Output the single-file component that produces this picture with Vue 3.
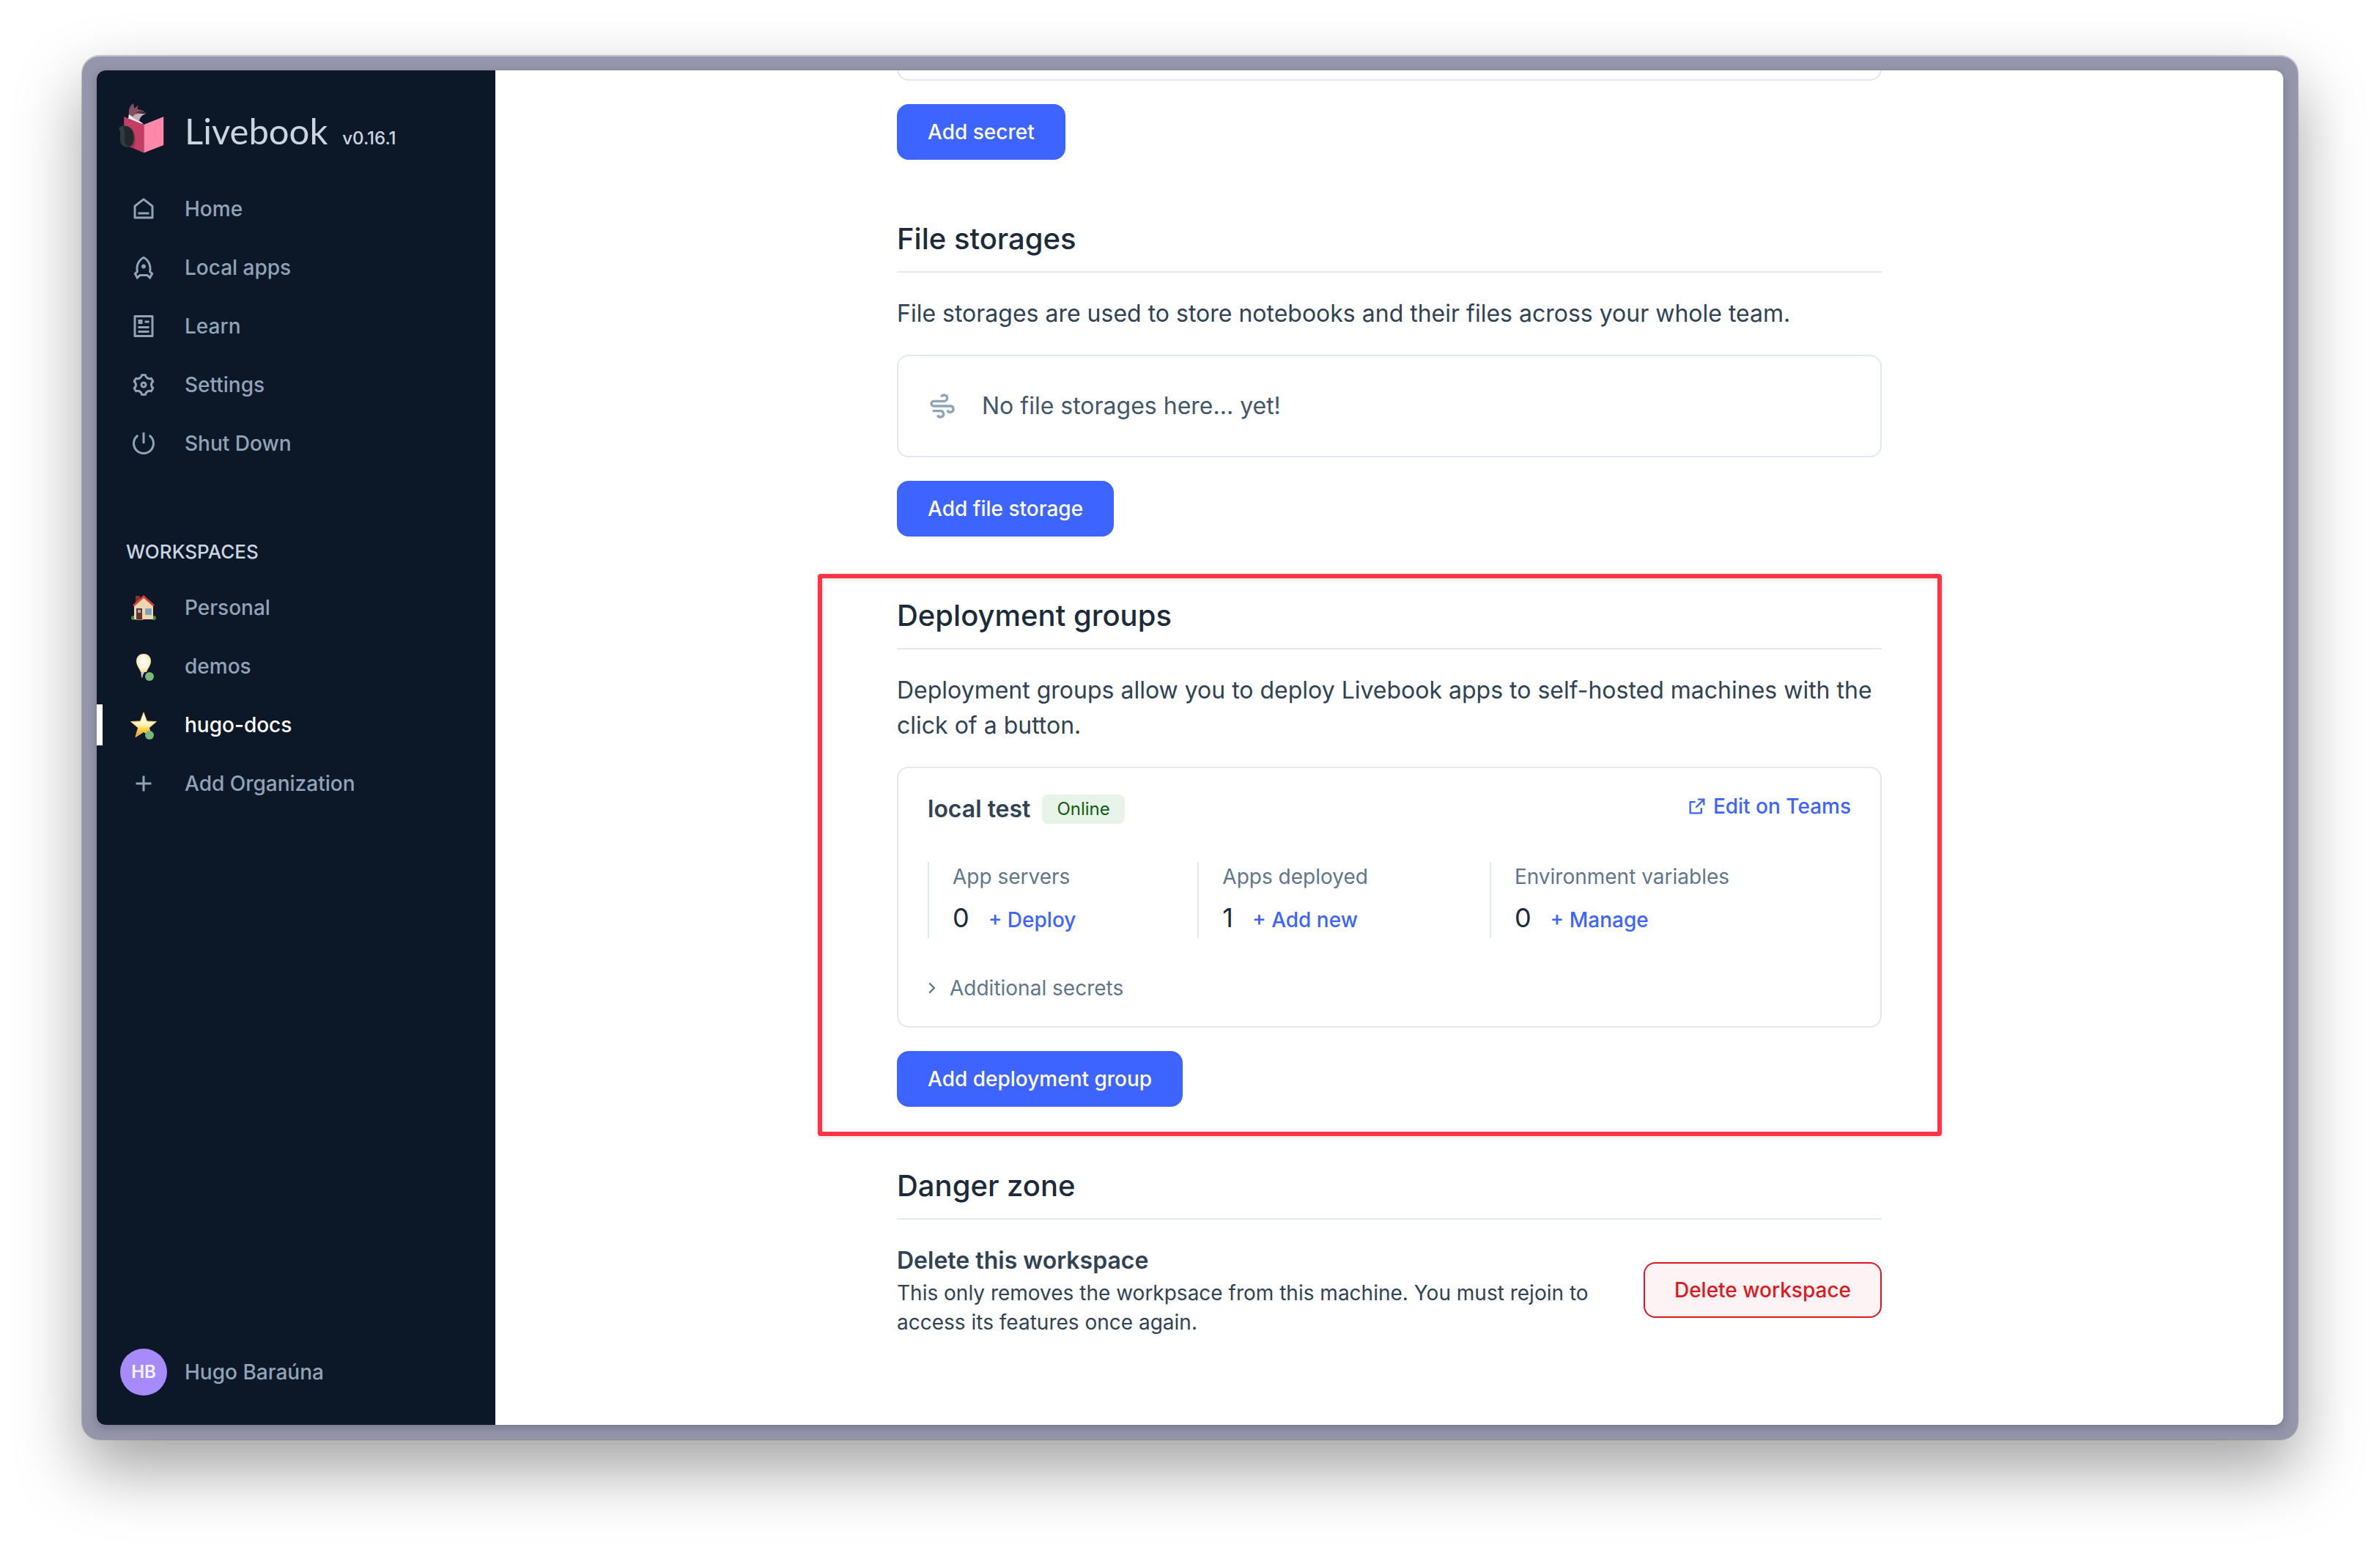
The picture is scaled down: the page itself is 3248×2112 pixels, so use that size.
<script setup>
const mainLinks = [
  { label: 'Home', path: 'M21 20a1 1 0 0 1-1 1H4a1 1 0 0 1-1-1V9.49a1 1 0 0 1 .386-.79l8-6.222a1 1 0 0 1 1.228 0l8 6.222a1 1 0 0 1 .386.79V20zm-2-1V9.978l-7-5.444-7 5.444V19h14zM7 15h10v2H7v-2z' },
  { label: 'Local apps', path: 'M5 13C5 7.912 7.902 3.563 12 1.818C16.097 3.563 19 7.912 19 13C19 13.823 18.924 14.626 18.779 15.403L20.719 17.235C20.885 17.391 20.924 17.639 20.815 17.838L18.32 22.413C18.187 22.656 17.884 22.745 17.641 22.613C17.599 22.59 17.561 22.561 17.528 22.527L15.293 20.292C15.105 20.105 14.851 20 14.585 20H9.414C9.149 20 8.894 20.105 8.707 20.292L6.472 22.527C6.276 22.723 5.96 22.723 5.765 22.527C5.731 22.494 5.702 22.456 5.679 22.414L3.184 17.838C3.075 17.639 3.115 17.391 3.28 17.235L5.22 15.403C5.076 14.626 5 13.823 5 13ZM6.475 19.696L7.292 18.879C7.855 18.316 8.618 18 9.414 18H14.585C15.381 18 16.144 18.316 16.707 18.879L17.524 19.696L18.506 17.896L17.406 16.857C16.912 16.39 16.688 15.705 16.813 15.036C16.937 14.372 17 13.691 17 13C17 9.13 15.005 5.7 12 4.04C8.995 5.7 7 9.13 7 13C7 13.691 7.063 14.372 7.186 15.036C7.311 15.705 7.087 16.39 6.593 16.857L5.494 17.896L6.475 19.696ZM12 13C10.895 13 10 12.105 10 11C10 9.895 10.895 9 12 9C13.104 9 14 9.895 14 11C14 12.105 13.104 13 12 13Z' },
  { label: 'Learn', path: 'M20 22H4a1 1 0 0 1-1-1V3a1 1 0 0 1 1-1h16a1 1 0 0 1 1 1v18a1 1 0 0 1-1 1zm-1-2V4H5v16h14zM7 6h4v4H7V6zm0 6h10v2H7v-2zm0 4h10v2H7v-2zm6-9h4v2h-4V7z' },
  { label: 'Settings', path: 'M3.34 17a10.018 10.018 0 0 1-.978-2.326 3 3 0 0 0 .002-5.347A9.99 9.99 0 0 1 4.865 4.99a3 3 0 0 0 4.631-2.674 9.99 9.99 0 0 1 5.007.002 3 3 0 0 0 4.632 2.672c.579.59 1.093 1.261 1.525 2.01.433.749.757 1.53.978 2.326a3 3 0 0 0-.002 5.347 9.99 9.99 0 0 1-2.501 4.337 3 3 0 0 0-4.631 2.674 9.99 9.99 0 0 1-5.007-.002 3 3 0 0 0-4.632-2.672A10.018 10.018 0 0 1 3.34 17zm5.66.196a4.993 4.993 0 0 1 2.25 2.77c.499.047 1 .048 1.499.001A4.993 4.993 0 0 1 15 17.197a4.993 4.993 0 0 1 3.525-.565c.29-.408.54-.843.748-1.298A4.993 4.993 0 0 1 18 12c0-1.26.47-2.437 1.273-3.334a8.126 8.126 0 0 0-.75-1.298A4.993 4.993 0 0 1 15 6.804a4.993 4.993 0 0 1-2.25-2.77c-.499-.047-1-.048-1.499-.001A4.993 4.993 0 0 1 9 6.803a4.993 4.993 0 0 1-3.525.565 7.99 7.99 0 0 0-.748 1.298A4.993 4.993 0 0 1 6 12c0 1.26-.47 2.437-1.273 3.334a8.126 8.126 0 0 0 .75 1.298A4.993 4.993 0 0 1 9 17.196zM12 15a3 3 0 1 1 0-6 3 3 0 0 1 0 6zm0-2a1 1 0 1 0 0-2 1 1 0 0 0 0 2z' },
  { label: 'Shut Down', path: 'M6.265 3.807l1.147 1.639a8 8 0 1 0 9.176 0l1.147-1.639A9.988 9.988 0 0 1 22 12c0 5.523-4.477 10-10 10S2 17.523 2 12a9.988 9.988 0 0 1 4.265-8.193zM11 12V2h2v10h-2z' },
]

const stats = [
  { label: 'App servers', value: 0, action: '+ Deploy' },
  { label: 'Apps deployed', value: 1, action: '+ Add new' },
  { label: 'Environment variables', value: 0, action: '+ Manage' },
]
</script>

<template>
  <div class="stage">
    <div class="frame">
      <div class="window">
        <aside class="sidebar">
          <a class="brand" href="#">
            <span class="cell">
              <svg class="logo" viewBox="2 0 64 68" aria-hidden="true">
                <path d="M14 14 L31 26 L34.400 29 L24 26 L13 21Z" fill="#e9edf2" />
                <path d="M14 15 C13 9 15 3 19.800 0 L21.500 7 L26.500 2.500 L25.500 8 C30 8.500 35 10.500 38 13.500 C30 12 23 13 20 19Z" fill="#85505f" />
                <path d="M19.500 19.500 C20 14.500 25 12.500 37 14.300 C32 16 28.500 19 28 25Z" fill="#c9abb3" />
                <path d="M23 13 C27 12 33 12.500 37.500 14 L38 13 C33 10 27 10 23 13Z" fill="#1c2a3a" opacity=".75" />
                <path d="M7.200 18.300 L34.400 29 V67.500 L7.200 56Z" fill="#c43d63" />
                <path d="M61.200 18.300 L34.400 29 V67.500 L61.200 57Z" fill="#ff87a7" />
                <path d="M18 34 C23 40 24.500 53 20 61.500 L12 58Z" fill="#a1304f" />
                <path d="M0 34 C4 29.500 9 30 13 31.500 C20 35 22 44 20.500 51 C19.500 57 16 60 12 59.700 C5 59.500 1.500 55 2 47 C2.300 41 2.500 38 0 34Z" fill="#323a41" />
                <path d="M8 31 C17 31 21.500 40 20.600 49 C20 56 16.500 59 13 58.500 C9 57 8 52 8 47 C8 41 9 36 6 33Z" fill="#21282b" />
              </svg>
            </span>
            <span class="brand-text">
              <span class="brand-name">Livebook</span>
              <span class="version">v0.16.1</span>
            </span>
          </a>

          <nav class="menu">
            <a v-for="link in mainLinks" :key="link.label" class="item" href="#">
              <span class="cell"><svg class="icon" viewBox="0 0 24 24" aria-hidden="true"><path :d="link.path" /></svg></span>
              {{ link.label }}
            </a>
          </nav>

          <h2 class="menu-title">WORKSPACES</h2>
          <nav class="menu">
            <a class="item" href="#">
              <span class="cell">
                <svg class="icon" viewBox="0 0 36 36" aria-hidden="true">
                  <circle cx="4" cy="32" r="3" fill="#4f8a3c" /><circle cx="32" cy="32" r="3" fill="#4f8a3c" />
                  <path d="M7 2h6v10H7z" fill="#8e2f2a" />
                  <path d="M5 15 18 3l13 12v19H5z" fill="#ecd8b0" />
                  <path d="M18 1 3 14.500l2 2L18 5l13 11.500 2-2z" fill="#d8403a" />
                  <path d="M8 19h8v15H8z" fill="#6b3325" /><path d="M10 21h4v4h-4z" fill="#7db9dd" />
                  <path d="M20 19h9v9h-9z" fill="#b79f7d" /><path d="M21 20h7v7h-7z" fill="#6ba6d6" />
                  <path d="M7 34h10v1H7z" fill="#8d8678" />
                </svg>
              </span>
              Personal
            </a>
            <a class="item" href="#">
              <span class="cell">
                <svg class="icon" viewBox="0 0 36 36" aria-hidden="true">
                  <defs>
                    <radialGradient id="bulb" cx=".5" cy=".45" r=".6"><stop offset="0" stop-color="#fffdfa" /><stop offset=".55" stop-color="#fdf3dc" /><stop offset="1" stop-color="#f3d27c" /></radialGradient>
                  </defs>
                  <path d="M18 1C11.500 1 8 5.500 8 11c0 6 4.500 10 6 15h8c1.500-5 6-9 6-15 0-5.500-3.500-10-10-10z" fill="url(#bulb)" />
                  <path d="M14.200 26h5l-2.200 4-.8 4.500-1.200-2z" fill="#c5c3cb" />
                </svg>
                <span class="dot"></span>
              </span>
              demos
            </a>
            <a class="item active" href="#" aria-current="page">
              <span class="cell">
                <svg class="icon" viewBox="0 0 36 36" aria-hidden="true">
                  <defs>
                    <linearGradient id="star" x1="0" y1="0" x2="0" y2="1"><stop offset="0" stop-color="#fffdf2" /><stop offset=".5" stop-color="#fff3bd" /><stop offset=".68" stop-color="#fbd34a" /><stop offset="1" stop-color="#e8941a" /></linearGradient>
                  </defs>
                  <path d="M18 1l4.500 12 13 .5-10 8.500 3.500 12.500L18 27.500 7 34.500 10.500 22 .5 13.500l13-.5z" fill="url(#star)" stroke="#efc56a" stroke-linejoin="round" />
                </svg>
                <span class="dot"></span>
              </span>
              hugo-docs
            </a>
            <a class="item" href="#">
              <span class="cell"><svg class="icon" viewBox="0 0 24 24" aria-hidden="true"><path d="M11 11V5h2v6h6v2h-6v6h-2v-6H5v-2z" /></svg></span>
              Add Organization
            </a>
          </nav>

          <button class="user" type="button">
            <span class="cell avatar">HB</span>
            Hugo Baraúna
          </button>
        </aside>

        <main class="main">
          <div class="content">
            <section>
              <div class="card card-tail"></div>
              <button class="btn" type="button">Add secret</button>
            </section>

            <section>
              <h2 class="heading">File storages</h2>
              <p class="lead">File storages are used to store notebooks and their files across your whole team.</p>
              <div class="card empty">
                <svg class="wind" viewBox="0 0 24 24" aria-hidden="true"><path d="M10.500 17H4v-2h6.500a3.500 3.500 0 1 1-3.278 4.730l1.873-.703A1.500 1.500 0 1 0 10.500 17zM5 11h13.500a3.500 3.500 0 1 1-3.278 4.730l1.873-.703A1.500 1.500 0 1 0 18.500 13H5a3 3 0 0 1 0-6h8.500a1.500 1.500 0 1 0-1.405-2.027l-1.873-.702A3.501 3.501 0 0 1 17 5.500 3.500 3.500 0 0 1 13.500 9H5a1 1 0 1 0 0 2z" /></svg>
                No file storages here... yet!
              </div>
              <button class="btn" type="button">Add file storage</button>
            </section>

            <section class="highlighted">
              <h2 class="heading">Deployment groups</h2>
              <p class="lead">Deployment groups allow you to deploy Livebook apps to self-hosted machines with the click of a button.</p>
              <div class="card group">
                <div class="group-head">
                  <h3 class="group-name">local test <span class="badge">Online</span></h3>
                  <a class="link" href="#">
                    <svg class="ext" viewBox="0 0 24 24" aria-hidden="true"><path d="M10 6v2H5v11h11v-5h2v6a1 1 0 0 1-1 1H4a1 1 0 0 1-1-1V7a1 1 0 0 1 1-1h6zm11-3v8h-2V6.413l-7.793 7.794-1.414-1.414L17.585 5H13V3h8z" /></svg>
                    Edit on Teams
                  </a>
                </div>
                <dl class="stats">
                  <div v-for="stat in stats" :key="stat.label" class="stat">
                    <dt>{{ stat.label }}</dt>
                    <dd>{{ stat.value }} <a class="link" href="#">{{ stat.action }}</a></dd>
                  </div>
                </dl>
                <button class="toggle" type="button" aria-expanded="false">
                  <svg class="chevron" viewBox="7 0 12 24" aria-hidden="true"><path d="M13.172 12l-4.950-4.950 1.414-1.414L16 12l-6.364 6.364-1.414-1.414z" /></svg>
                  Additional secrets
                </button>
              </div>
              <button class="btn" type="button">Add deployment group</button>
            </section>

            <section>
              <h2 class="heading">Danger zone</h2>
              <div class="danger">
                <div>
                  <h3 class="danger-title">Delete this workspace</h3>
                  <p class="danger-text">This only removes the workpsace from this machine. You must rejoin to access its features once again.</p>
                </div>
                <button class="btn btn-danger" type="button">Delete workspace</button>
              </div>
            </section>
          </div>
        </main>
      </div>
    </div>
  </div>
</template>

<style>
body {
  margin: 0;
  background: #fff;
}
</style>

<style scoped>
* {
  box-sizing: border-box;
  margin: 0;
}

.stage {
  display: flex;
  min-height: 100vh;
  padding: 76px 112px 148px;
  font: 400 28px/40px Inter, "Liberation Sans", sans-serif;
  color: #304254;
}

.frame {
  display: flex;
  flex: 1;
  padding: 20px;
  border-radius: 24px;
  background: #9595ac;
  box-shadow: inset 0 1px 0 #cfcfda, 0 0 0 1px rgba(0, 0, 0, .2), 0 40px 90px rgba(0, 0, 0, .37);
}

.window {
  display: flex;
  flex: 1;
  overflow: hidden;
  border-radius: 12px;
  background: #fff;
  box-shadow: 0 4px 14px rgba(0, 0, 0, .2);
}

a {
  color: inherit;
  text-decoration: none;
}

button {
  border: 0;
  background: none;
  font: inherit;
  color: inherit;
  cursor: pointer;
}

svg {
  display: block;
  fill: currentColor;
}

.sidebar {
  display: flex;
  flex: none;
  flex-direction: column;
  width: 544px;
  padding: 44px 0 40px;
  background: #0c1728;
  color: #91a4b7;
  font-weight: 500;
}

.cell {
  position: relative;
  display: flex;
  flex: none;
  align-items: center;
  justify-content: center;
  width: 64px;
}

.brand {
  display: flex;
  align-items: center;
  gap: 24px;
  margin-bottom: 48px;
  padding-left: 32px;
  color: #cad5e0;
}

.logo {
  width: 64px;
  height: 68px;
  overflow: visible;
}

.brand-text {
  display: flex;
  align-items: baseline;
  gap: 20px;
  padding-top: 8px;
}

.brand-name {
  font: 400 49px/60px Lato, sans-serif;
}

.version {
  font-size: 24px;
}

.menu {
  display: flex;
  flex-direction: column;
  gap: 24px;
}

.item {
  display: flex;
  align-items: center;
  gap: 24px;
  height: 56px;
  padding-left: 24px;
  border-left: 8px solid transparent;
}

.active {
  border-color: #fff;
  color: #fff;
}

.icon {
  width: 36px;
  height: 36px;
}

.dot {
  position: absolute;
  right: 18px;
  bottom: -2px;
  width: 12px;
  height: 12px;
  border-radius: 50%;
  background: #77b876;
}

.menu-title {
  margin: 100px 0 28px 40px;
  font-size: 26px;
  font-weight: 500;
  line-height: 40px;
  color: #cad5e0;
}

.user {
  display: flex;
  align-items: center;
  gap: 24px;
  margin-top: auto;
  padding: 0 0 0 32px;
}

.avatar {
  height: 64px;
  border-radius: 50%;
  background: #a78bfa;
  color: #f0f5f9;
  font-size: 24px;
  font-weight: 600;
}

.main {
  flex: 1;
  min-width: 0;
  overflow: hidden;
}

.content {
  display: flex;
  flex-direction: column;
  gap: 80px;
  max-width: 1344px;
  margin: 0 auto;
  padding-bottom: 120px;
}

.heading {
  padding-bottom: 16px;
  border-bottom: 2px solid #e1e8f0;
  font-size: 40px;
  font-weight: 500;
  line-height: 56px;
  color: #1c2a3a;
}

.lead {
  margin: 32px 0;
  font-size: 32px;
  line-height: 48px;
}

.card {
  margin-bottom: 32px;
  border: 2px solid #e1e8f0;
  border-radius: 16px;
}

.card-tail {
  height: 40px;
  margin-top: -26px;
}

.empty {
  display: flex;
  align-items: center;
  gap: 34px;
  padding: 44px 40px;
  font-size: 32px;
  line-height: 48px;
  color: #445668;
}

.wind {
  width: 40px;
  height: 40px;
  color: #91a4b7;
}

.btn {
  height: 76px;
  padding: 0 40px;
  border: 2px solid #3e64ff;
  border-radius: 16px;
  background: #3e64ff;
  color: #fff;
  font-weight: 500;
}

.btn-danger {
  flex: none;
  border-color: #db1920;
  background: #fdf3f4;
  color: #db1920;
}

.highlighted {
  position: relative;
}

.highlighted::after {
  content: "";
  position: absolute;
  inset: -29px -82px -40px -108px;
  border: 6px solid #fe3345;
  border-radius: 4px;
  box-shadow: 0 2px 6px rgba(0, 0, 0, .12), inset 0 2px 6px rgba(0, 0, 0, .1);
  pointer-events: none;
}

.group {
  padding: 32px 40px;
  border-color: #e5e7e9;
}

.group-head {
  display: flex;
  align-items: flex-start;
  justify-content: space-between;
}

.group-name {
  display: flex;
  align-items: center;
  gap: 16px;
  font-size: 32px;
  font-weight: 600;
  line-height: 48px;
}

.badge {
  padding: 0 20px;
  border-radius: 8px;
  background: #e9f4e9;
  color: #0f5e14;
  font-size: 24px;
  font-weight: 400;
  line-height: 40px;
}

.link {
  display: flex;
  align-items: center;
  gap: 8px;
  color: #3e64ff;
  font-size: 28px;
  font-weight: 500;
  line-height: 40px;
}

.ext {
  width: 28px;
  height: 28px;
}

.stats {
  display: flex;
  margin: 48px 0;
}

.stat {
  flex: 1 1 auto;
  padding-left: 32px;
  border-left: 2px solid #e1e8f0;
}

dt {
  color: #61758a;
}

dd {
  display: flex;
  align-items: baseline;
  gap: 26px;
  margin-top: 8px;
  font-size: 36px;
  line-height: 56px;
  color: #1c2a3a;
}

.toggle {
  display: flex;
  align-items: center;
  gap: 16px;
  padding: 0;
  color: #61758a;
}

.chevron {
  width: 14px;
  height: 28px;
}

.danger {
  display: flex;
  align-items: center;
  justify-content: space-between;
  gap: 64px;
  margin-top: 32px;
}

.danger-title {
  font-size: 32px;
  font-weight: 600;
  line-height: 48px;
}
</style>
